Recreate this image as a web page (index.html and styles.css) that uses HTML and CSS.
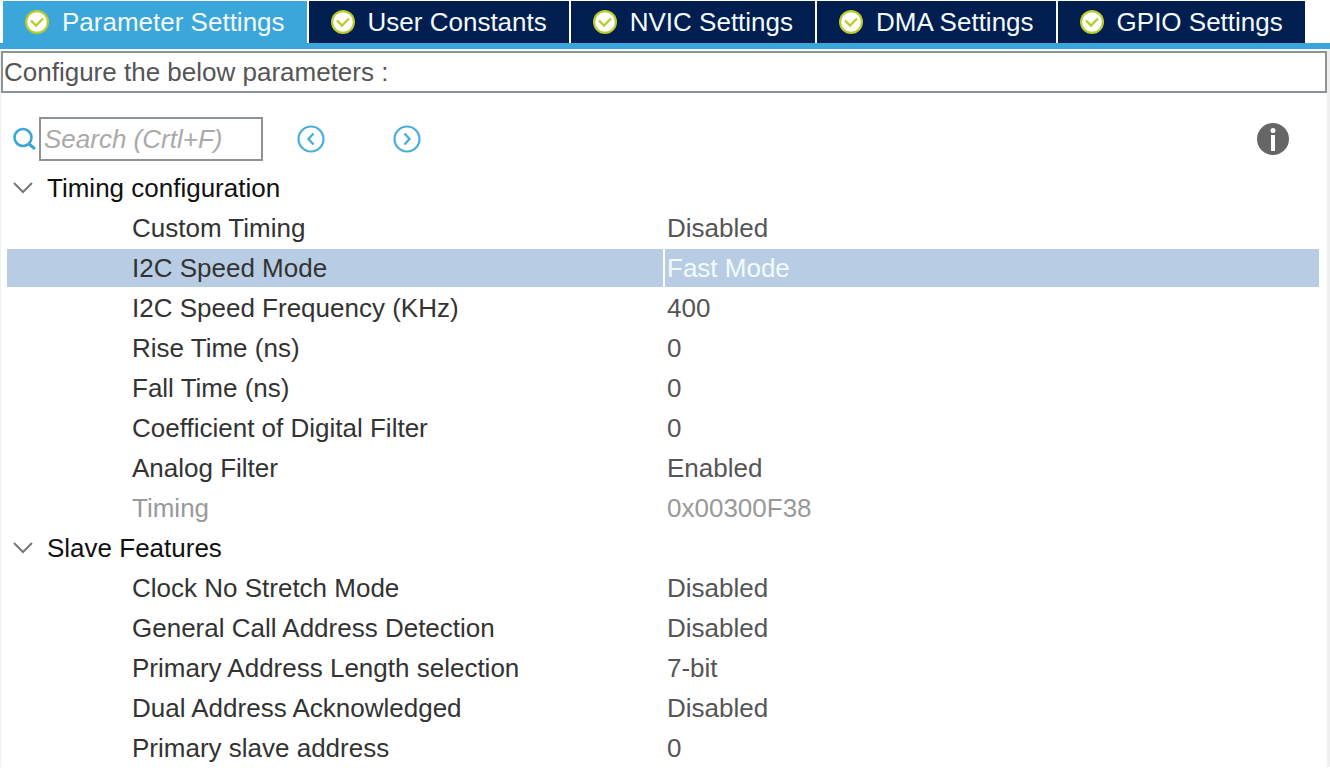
FILE: index.html
```html
<!DOCTYPE html>
<html lang="en">
<head>
  <meta charset="UTF-8">
  <title>I2C Configuration</title>
  <link rel="stylesheet" href="styles.css">
</head>
<body>

<svg class="defs" aria-hidden="true">
  <symbol id="check" viewBox="0 0 24 24">
    <circle cx="12" cy="12" r="12" fill="#b9cc2b"/>
    <circle cx="12" cy="12" r="9.800" fill="#fff"/>
    <path d="M6 10.500l5 5 7-7" fill="none" stroke="#b9cc2b" stroke-width="2.400"/>
  </symbol>
  <symbol id="chevron" viewBox="0 0 20 12">
    <path d="M1 1l9 9 9-9" fill="none" stroke="#777" stroke-width="2"/>
  </symbol>
</svg>

<nav class="tabs">
  <button class="tab active"><svg class="check"><use href="#check"/></svg>Parameter Settings</button>
  <button class="tab"><svg class="check"><use href="#check"/></svg>User Constants</button>
  <button class="tab"><svg class="check"><use href="#check"/></svg>NVIC Settings</button>
  <button class="tab"><svg class="check"><use href="#check"/></svg>DMA Settings</button>
  <button class="tab"><svg class="check"><use href="#check"/></svg>GPIO Settings</button>
</nav>

<main class="panel">
  <p class="hint">Configure the below parameters :</p>

  <div class="toolbar">
    <label class="search" for="search" aria-label="Search">
      <svg width="24" height="24" viewBox="0 0 24 24" fill="none" stroke="#3aa6da">
        <circle cx="11" cy="10.500" r="8.500" stroke-width="2.600"/>
        <path d="M16.500 16.500l6.500 5.500" stroke-width="3"/>
      </svg>
    </label>
    <input type="text" id="search" placeholder="Search (Crtl+F)">
    <button class="icon-btn prev" aria-label="Previous">
      <svg width="28" height="28" viewBox="0 0 28 28" fill="none" stroke="#4badda">
        <circle cx="14" cy="14" r="12.500" stroke-width="2.200"/>
        <path d="M16.500 8.500L11.500 14l5 5.500" stroke-width="2.400"/>
      </svg>
    </button>
    <button class="icon-btn next" aria-label="Next">
      <svg width="28" height="28" viewBox="0 0 28 28" fill="none" stroke="#4badda">
        <circle cx="14" cy="14" r="12.500" stroke-width="2.200"/>
        <path d="M11.500 8.500l5 5.500-5 5.500" stroke-width="2.400"/>
      </svg>
    </button>
    <button class="icon-btn info" aria-label="Information">
      <svg width="32" height="32" viewBox="0 0 32 32">
        <circle cx="16" cy="16" r="16" fill="#666"/>
        <circle cx="16" cy="7.500" r="2.500" fill="#fff"/>
        <path d="M14 12h4v16h-4z" fill="#fff"/>
      </svg>
    </button>
  </div>

  <table class="params">
    <tbody>
      <tr class="group"><th colspan="2"><button><svg class="chevron"><use href="#chevron"/></svg>Timing configuration</button></th></tr>
      <tr><td>Custom Timing</td><td>Disabled</td></tr>
      <tr class="selected"><td>I2C Speed Mode</td><td>Fast Mode</td></tr>
      <tr><td>I2C Speed Frequency (KHz)</td><td>400</td></tr>
      <tr><td>Rise Time (ns)</td><td>0</td></tr>
      <tr><td>Fall Time (ns)</td><td>0</td></tr>
      <tr><td>Coefficient of Digital Filter</td><td>0</td></tr>
      <tr><td>Analog Filter</td><td>Enabled</td></tr>
      <tr class="disabled"><td>Timing</td><td>0x00300F38</td></tr>
    </tbody>
    <tbody>
      <tr class="group"><th colspan="2"><button><svg class="chevron"><use href="#chevron"/></svg>Slave Features</button></th></tr>
      <tr><td>Clock No Stretch Mode</td><td>Disabled</td></tr>
      <tr><td>General Call Address Detection</td><td>Disabled</td></tr>
      <tr><td>Primary Address Length selection</td><td>7-bit</td></tr>
      <tr><td>Dual Address Acknowledged</td><td>Disabled</td></tr>
      <tr class="last"><td>Primary slave address</td><td>0</td></tr>
    </tbody>
  </table>
</main>

</body>
</html>
```
FILE: styles.css
```css
* {
  box-sizing: border-box;
}

body {
  margin: 0;
  background: #fff;
  color: #333;
  font-family: "Liberation Sans", Arial, sans-serif;
  font-size: 26px;
  line-height: 38px;
}

button, input {
  font: inherit;
  color: inherit;
}

button {
  display: flex;
  align-items: center;
  padding: 0;
  border: none;
  background: none;
  white-space: nowrap;
  cursor: pointer;
}

.defs {
  display: none;
}

.tabs {
  display: flex;
  gap: 2px;
  padding: 1px 3px 0;
  border-bottom: 6px solid #3aa6da;
}

.tab {
  gap: 13px;
  height: 42px;
  padding: 0 22px;
  background: #001e50;
  color: #f4fbff;
}

.tab.active {
  background: #3aa6da;
}

.check {
  width: 24px;
  height: 24px;
}

.panel {
  padding-top: 2px;
  border-left: 1px solid #f0f0f0;
  border-right: 3px solid #f0f0f0;
}

.hint {
  margin: 0;
  padding: 0 1px;
  border: 2px solid #8d9499;
  color: #555;
}

.toolbar {
  display: flex;
  align-items: center;
  padding: 24px 38px 8px 11px;
}

.search {
  display: flex;
  margin-right: 3px;
}

#search {
  width: 224px;
  height: 44px;
  padding: 0 3px;
  border: 2px solid #8d9499;
  background: #fff;
}

#search::placeholder {
  color: #aaa;
  font-style: italic;
  opacity: 1;
}

.prev {
  margin-left: 34px;
}

.next {
  margin-left: 68px;
}

.info {
  margin-left: auto;
}

.params {
  width: 100%;
  padding: 0 8px 0 6px;
  border-spacing: 0;
  table-layout: fixed;
}

.params th, .params td {
  height: 40px;
  padding: 0;
  border-bottom: 2px solid #fff;
  text-align: left;
  font-weight: normal;
}

.params td:first-child {
  padding-left: 125px;
}

.params td + td {
  padding-left: 2px;
  border-left: 2px solid #fff;
  color: #555;
}

.group button {
  gap: 14px;
  padding-left: 6px;
  color: #111;
}

.chevron {
  width: 20px;
  height: 12px;
}

.params .selected td {
  background: #b8cde4;
  background-clip: padding-box;
}

.params .selected td + td {
  color: #f4fbff;
}

.params .disabled td {
  color: #999;
}

.params .last td {
  height: 38px;
  border-bottom: none;
}
```
